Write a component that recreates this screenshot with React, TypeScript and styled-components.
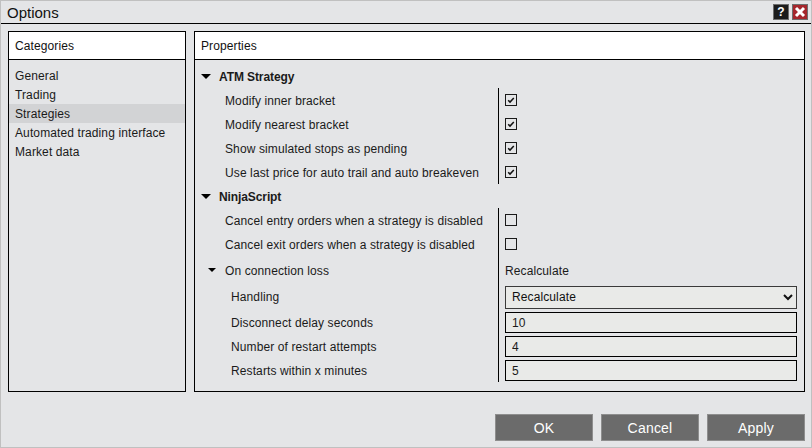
import styled, { createGlobalStyle } from "styled-components";

const GlobalStyle = createGlobalStyle`
  html, body {
    margin: 0;
    padding: 0;
  }

  body {
    font-family: "Liberation Sans", Arial, sans-serif;
    font-size: 12px;
    letter-spacing: 0.11px;
    color: #1a1a1a;
  }
`;

const Window = styled.div`
  box-sizing: border-box;
  width: 812px;
  height: 448px;
  display: flex;
  flex-direction: column;
  background: #e4e5e7;
  border: 1px solid #c0c0c0;
  overflow: hidden;
`;

const TitleBar = styled.div`
  box-sizing: border-box;
  height: 23px;
  flex: none;
  display: flex;
  align-items: center;
  justify-content: space-between;
  padding: 0 3px 0 6px;
  border-bottom: 1px solid #000;
`;

const Title = styled.span`
  font-size: 15px;
  letter-spacing: 0;
  color: #111;
`;

const TitleButtons = styled.div`
  display: flex;
  gap: 3px;
  margin-bottom: 1px;
`;

const TitleButton = styled.div<{ $bg: string }>`
  box-sizing: border-box;
  width: 16px;
  height: 16px;
  display: flex;
  align-items: center;
  justify-content: center;
  background: ${({ $bg }) => $bg};
  border: 1px solid #6e6e6e;
  color: #fff;
  font-size: 12px;
  font-weight: bold;
`;

const Content = styled.div`
  height: 361px;
  flex: none;
  display: flex;
  gap: 8px;
  padding: 7px 6px 0 7px;
`;

const Panel = styled.section<{ $width?: number }>`
  box-sizing: border-box;
  display: flex;
  flex-direction: column;
  border: 1px solid #000;
  ${({ $width }) => ($width ? `width: ${$width}px; flex: none;` : "flex: 1;")}
`;

const PanelHeader = styled.div`
  box-sizing: border-box;
  height: 28px;
  flex: none;
  display: flex;
  align-items: center;
  padding-left: 6px;
  background: #fff;
  border-bottom: 1px solid #000;
  color: #111;
`;

const CategoryList = styled.ul`
  list-style: none;
  margin: 0;
  padding: 6px 0 0;
`;

const Category = styled.li<{ $active?: boolean }>`
  height: 19px;
  line-height: 21px;
  padding-left: 6px;
  background: ${({ $active }) => ($active ? "#d2d3d5" : "transparent")};
`;

const PropertyBody = styled.div`
  padding-top: 4px;
`;

const SectionHeader = styled.div`
  box-sizing: border-box;
  height: 24px;
  display: flex;
  align-items: center;
  gap: 8px;
  padding: 2px 0 0 6px;
  font-weight: bold;
  letter-spacing: -0.1px;
`;

const Row = styled.div<{ $height?: number }>`
  height: ${({ $height }) => $height ?? 24}px;
  display: flex;
  align-items: center;
`;

const Label = styled.div<{ $indent?: number; $flush?: boolean }>`
  box-sizing: border-box;
  width: 303px;
  flex: none;
  display: flex;
  align-items: center;
  padding: ${({ $flush }) => ($flush ? "0" : "2px")} 0 0 ${({ $indent }) => $indent ?? 30}px;
`;

const Caret = styled.span<{ $small?: boolean }>`
  width: 0;
  height: 0;
  flex: none;
  margin-top: -2px;
  border-style: solid;
  border-color: #000 transparent transparent;
  border-width: ${({ $small }) => ($small ? "4px 4px 0" : "5px 5px 0")};
`;

const NestedLabel = styled(Label)`
  gap: 9px;
`;

const Value = styled.div<{ $text?: boolean }>`
  box-sizing: border-box;
  height: 100%;
  flex: 1;
  display: flex;
  align-items: center;
  padding: ${({ $text }) => ($text ? "2px" : "0")} 7px 0 6px;
  border-left: 1px solid #000;
`;

const CheckBox = styled.span`
  box-sizing: border-box;
  width: 12px;
  height: 12px;
  display: flex;
  align-items: center;
  justify-content: center;
  border: 1px solid #1a1a1a;
`;

const Select = styled.select`
  box-sizing: border-box;
  width: 100%;
  height: 23px;
  padding: 0 2px;
  font: inherit;
  letter-spacing: inherit;
  color: #111;
  background: #e9eae8;
  border: 1px solid #3a3a3a;
  border-radius: 0;
  outline: none;
`;

const TextInput = styled.input`
  box-sizing: border-box;
  width: 100%;
  height: 21px;
  padding: 2px 6px 0;
  font: inherit;
  letter-spacing: inherit;
  color: #1a1a1a;
  background: #e9eae8;
  border: 1px solid #000;
  border-radius: 0;
  outline: none;
`;

const Footer = styled.footer`
  flex: 1;
  display: flex;
  justify-content: flex-end;
  gap: 8px;
  padding: 22px 6px 0 0;
`;

const ActionButton = styled.button`
  box-sizing: border-box;
  width: 98px;
  height: 27px;
  padding: 0;
  font-family: inherit;
  font-size: 14px;
  letter-spacing: 0.2px;
  color: #fff;
  background: #6b6b6b;
  border: 1px solid #8e8e8e;
  border-radius: 0;
`;

const CheckMark = () => (
  <svg width="8" height="8" viewBox="0 0 8 8">
    <path d="M1.2 4.2l1.8 1.9L6.8 2" fill="none" stroke="#111" strokeWidth="1.5" />
  </svg>
);

const CloseMark = () => (
  <svg width="12" height="12" viewBox="0 0 12 12">
    <path d="M2 2l8 8M10 2l-8 8" fill="none" stroke="#fff" strokeWidth="3" />
  </svg>
);

const categories = ["General", "Trading", "Strategies", "Automated trading interface", "Market data"];

const atmRows = [
  "Modify inner bracket",
  "Modify nearest bracket",
  "Show simulated stops as pending",
  "Use last price for auto trail and auto breakeven",
];

const restartRows = [
  { label: "Disconnect delay seconds", value: "10" },
  { label: "Number of restart attempts", value: "4" },
  { label: "Restarts within x minutes", value: "5" },
];

export default function App() {
  return (
    <>
      <GlobalStyle />
      <Window>
        <TitleBar>
          <Title>Options</Title>
          <TitleButtons>
            <TitleButton $bg="#1c1c1c">?</TitleButton>
            <TitleButton $bg="#a5262c">
              <CloseMark />
            </TitleButton>
          </TitleButtons>
        </TitleBar>

        <Content>
          <Panel $width={178}>
            <PanelHeader>Categories</PanelHeader>
            <CategoryList>
              {categories.map((name) => (
                <Category key={name} $active={name === "Strategies"}>
                  {name}
                </Category>
              ))}
            </CategoryList>
          </Panel>

          <Panel>
            <PanelHeader>Properties</PanelHeader>
            <PropertyBody>
              <SectionHeader>
                <Caret />
                ATM Strategy
              </SectionHeader>
              {atmRows.map((label) => (
                <Row key={label}>
                  <Label>{label}</Label>
                  <Value>
                    <CheckBox>
                      <CheckMark />
                    </CheckBox>
                  </Value>
                </Row>
              ))}

              <SectionHeader>
                <Caret />
                NinjaScript
              </SectionHeader>
              <Row>
                <Label>Cancel entry orders when a strategy is disabled</Label>
                <Value>
                  <CheckBox />
                </Value>
              </Row>
              <Row>
                <Label>Cancel exit orders when a strategy is disabled</Label>
                <Value>
                  <CheckBox />
                </Value>
              </Row>
              <Row $height={28}>
                <NestedLabel $indent={13}>
                  <Caret $small />
                  On connection loss
                </NestedLabel>
                <Value $text>Recalculate</Value>
              </Row>
              <Row $height={26}>
                <Label $indent={36} $flush>
                  Handling
                </Label>
                <Value>
                  <Select defaultValue="Recalculate">
                    <option>Recalculate</option>
                  </Select>
                </Value>
              </Row>
              {restartRows.map(({ label, value }) => (
                <Row key={label}>
                  <Label $indent={36}>{label}</Label>
                  <Value>
                    <TextInput defaultValue={value} />
                  </Value>
                </Row>
              ))}
            </PropertyBody>
          </Panel>
        </Content>

        <Footer>
          <ActionButton>OK</ActionButton>
          <ActionButton>Cancel</ActionButton>
          <ActionButton>Apply</ActionButton>
        </Footer>
      </Window>
    </>
  );
}
